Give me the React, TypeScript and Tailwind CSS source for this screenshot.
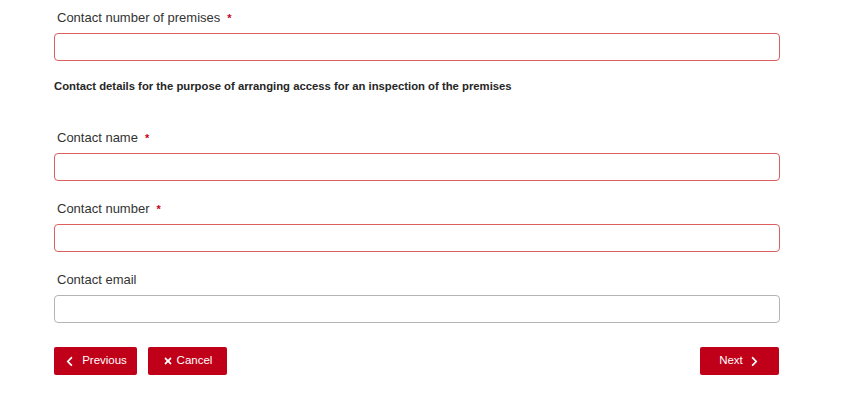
import { FaChevronLeft, FaChevronRight, FaTimes } from "react-icons/fa";

type FieldProps = { label: string; required?: boolean };

function Field({ label, required }: FieldProps) {
  return (
    <div className="mb-[18px]">
      <label className="flex h-5 items-center pl-[3px] mb-[5px] text-[13px] text-[#333]">
        {label}
        {required && <span className="ml-[7px] text-[11px] font-bold text-[#c9001c]">*</span>}
      </label>
      <input
        type="text"
        className={
          "block h-[28px] w-full rounded-[4px] border bg-white px-2 text-[13px] outline-none " +
          (required ? "border-[#dc5f5f]" : "border-[#b4b4b4]")
        }
      />
    </div>
  );
}

export default function App() {
  return (
    <div className="min-h-[402px] w-[850px] bg-white font-['Liberation_Sans',Arial,sans-serif]">
      <div className="ml-[54px] w-[726px] pt-[8px]">
        <Field label="Contact number of premises" required />

        <p className="-mt-[1px] h-4 text-[11.3px] font-bold leading-4 text-[#262626]">
          Contact details for the purpose of arranging access for an inspection of the premises
        </p>

        <div className="mt-[34px]">
          <Field label="Contact name" required />
          <Field label="Contact number" required />
          <Field label="Contact email" />
        </div>

        <div className="mt-[24px] flex items-center">
          <button className="flex h-[28px] w-[83px] items-center justify-center gap-[7px] rounded-[2px] bg-[#bf0018] text-[11.5px] text-white">
            <FaChevronLeft className="h-[11px] w-[11px]" />
            Previous
          </button>
          <button className="ml-[11px] flex h-[28px] w-[79px] items-center justify-center gap-[4px] rounded-[2px] bg-[#bf0018] text-[11.5px] text-white">
            <FaTimes className="h-[10px] w-[10px]" />
            Cancel
          </button>
          <button className="ml-auto mr-[1px] flex h-[28px] w-[79px] items-center justify-center gap-[6px] rounded-[2px] bg-[#bf0018] text-[11.5px] text-white">
            Next
            <FaChevronRight className="h-[11px] w-[11px]" />
          </button>
        </div>
      </div>
    </div>
  );
}
